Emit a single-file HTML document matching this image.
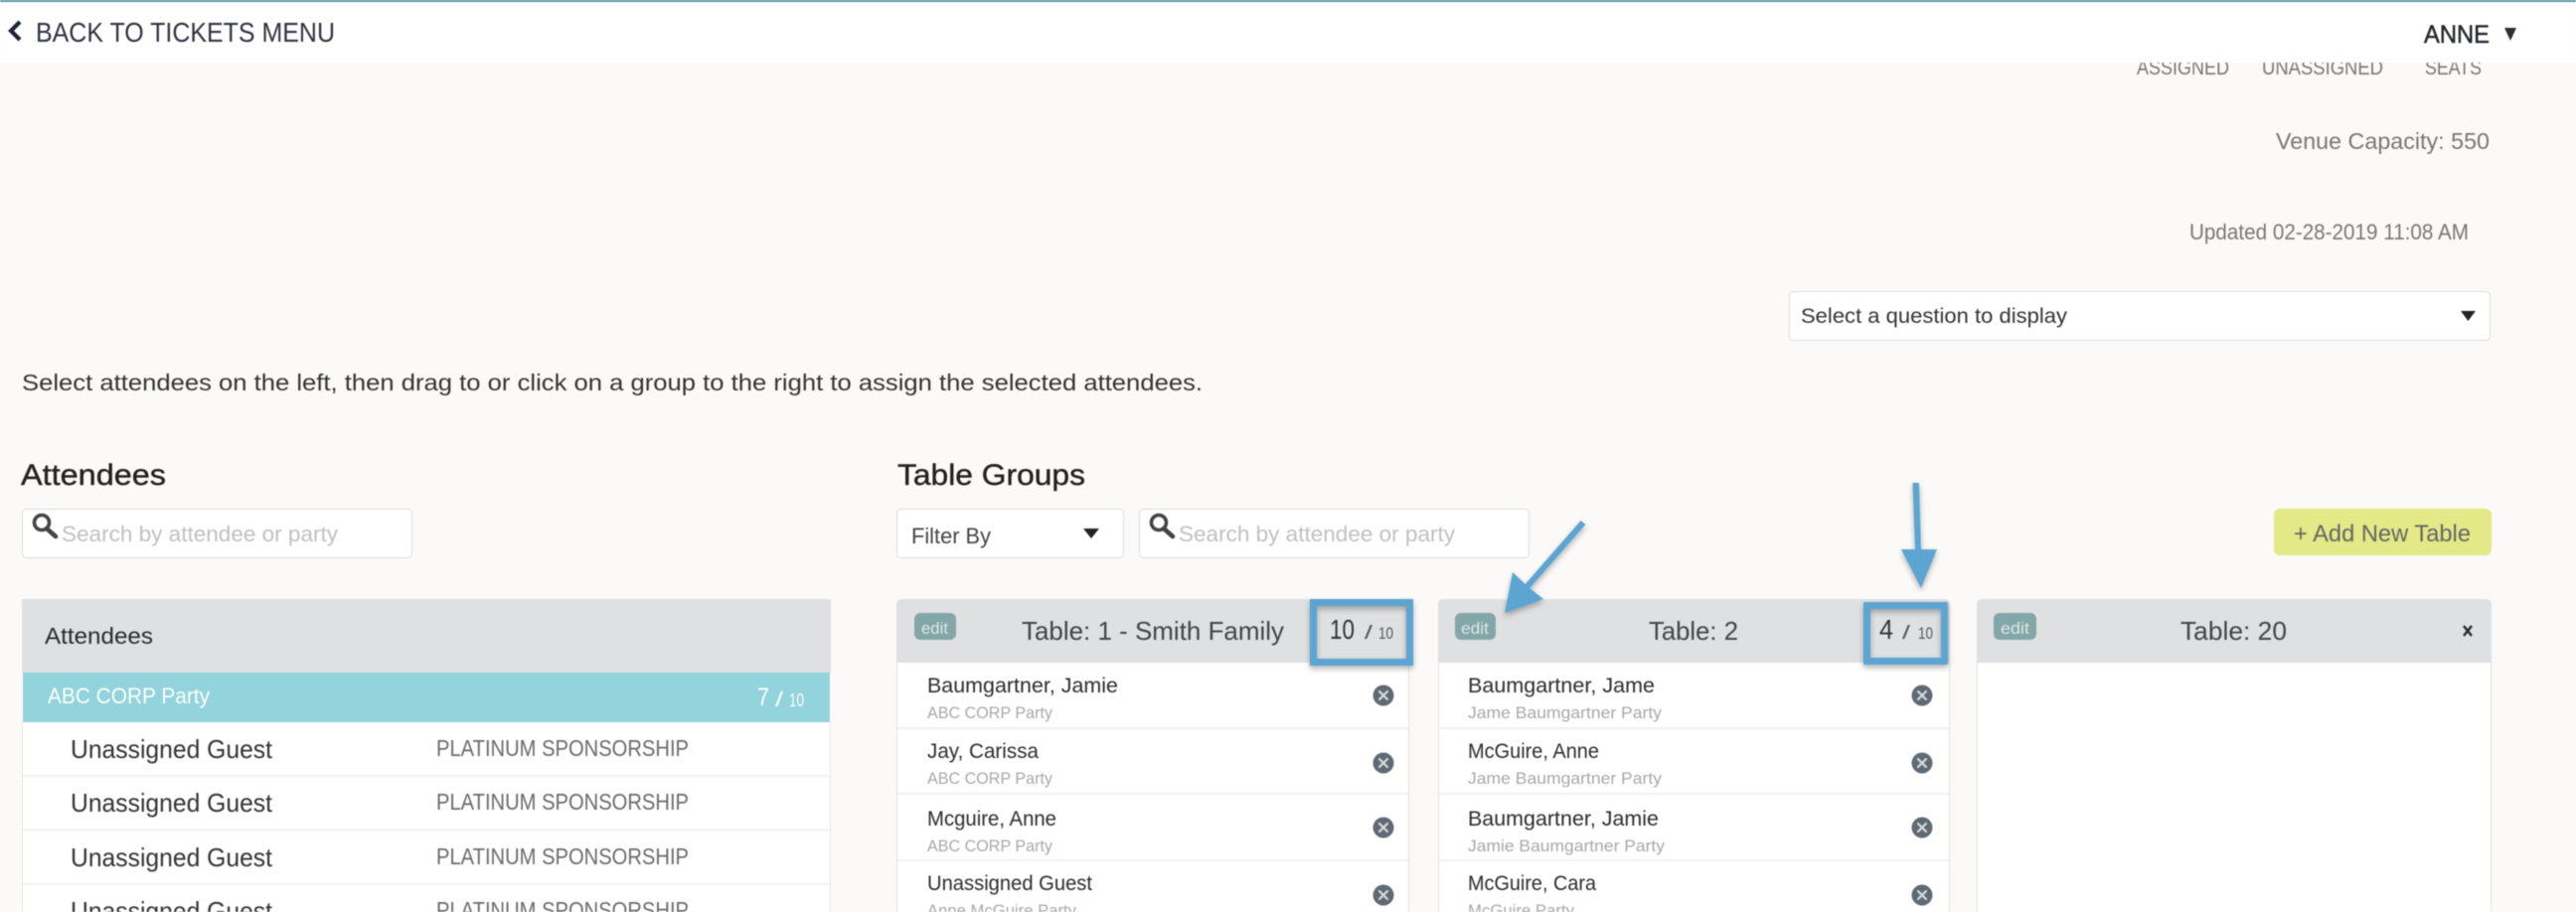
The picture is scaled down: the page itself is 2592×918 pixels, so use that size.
<!DOCTYPE html>
<html lang="en">
<head>
<meta charset="utf-8">
<title>Table Groups</title>
<style>
html,body{margin:0;padding:0;width:2592px;height:918px;overflow:hidden;background:#fbfaf8}
svg{display:block;filter:blur(.55px)}
text{font-family:"Liberation Sans",sans-serif;fill:#333}
.g{fill:#777}
.n{font-size:21px;fill:#2c2c30}
.p{font-size:17px;fill:#a8a8a8}
.u{font-size:26px;fill:#333}
.s{font-size:23px;fill:#6a6a6a}
.e{font-size:17px;fill:#dbe8e8}
.t{font-size:26px;fill:#444}
.ph{font-size:22px;fill:#c0c0c0}
.h{stroke:#222;stroke-width:.4px}
</style>
</head>
<body>
<svg xmlns="http://www.w3.org/2000/svg" width="2592" height="918" viewBox="0 0 2592 918">
<defs>
<filter id="sh" x="-30%" y="-30%" width="160%" height="160%"><feDropShadow dx="0" dy="3" stdDeviation="3" flood-color="#000" flood-opacity=".3"/></filter>
<g id="x"><circle cx="0" cy="0" r="10.5" fill="#5f6a73"/><path d="M-4-4L4 4M4-4L-4 4" stroke="#d6dadc" stroke-width="2.2" stroke-linecap="round"/></g>
<g id="q"><circle cx="0" cy="0" r="7.5" fill="none" stroke="#444" stroke-width="3.6"/><path d="M5 6L14 14" stroke="#444" stroke-width="4.6" stroke-linecap="round"/></g>
</defs>

<rect width="2592" height="918" fill="#fbfaf8"/>

<!-- clipped stat labels -->
<text class="g" x="2150" y="75" font-size="21" textLength="93" lengthAdjust="spacingAndGlyphs">ASSIGNED</text>
<text class="g" x="2276" y="75" font-size="21" textLength="122" lengthAdjust="spacingAndGlyphs">UNASSIGNED</text>
<text class="g" x="2440" y="75" font-size="21" textLength="57" lengthAdjust="spacingAndGlyphs">SEATS</text>

<!-- header -->
<rect width="2592" height="63" fill="#fff"/>
<rect width="2592" height="2" fill="#5a95a5"/>
<path d="M20 22L11 31L20 40" fill="none" stroke="#1d2433" stroke-width="4.2"/>
<text x="36" y="42" font-size="28" textLength="301" lengthAdjust="spacingAndGlyphs" style="fill:#2f3340">BACK TO TICKETS MENU</text>
<text x="2439" y="43" font-size="25" textLength="66" lengthAdjust="spacingAndGlyphs" class="h" style="fill:#22262e">ANNE</text>
<path d="M2520 28H2532L2526 41Z" fill="#2a3038"/>

<text class="g" x="2290" y="150" font-size="23" textLength="215" lengthAdjust="spacingAndGlyphs">Venue Capacity: 550</text>
<text class="g" x="2203" y="241" font-size="22" textLength="281" lengthAdjust="spacingAndGlyphs">Updated 02-28-2019 11:08 AM</text>

<rect x="1800.500" y="293.500" width="705" height="49" rx="4" fill="#fff" stroke="#dedede"/>
<text x="1812" y="325" font-size="21" textLength="268" lengthAdjust="spacingAndGlyphs">Select a question to display</text>
<path d="M2476 313H2491L2483.500 323Z" fill="#222"/>

<text x="22" y="393" font-size="23" textLength="1188" lengthAdjust="spacingAndGlyphs">Select attendees on the left, then drag to or click on a group to the right to assign the selected attendees.</text>

<text class="h" x="21" y="488" font-size="30" textLength="146" lengthAdjust="spacingAndGlyphs" style="fill:#222">Attendees</text>
<text class="h" x="903" y="488" font-size="30" textLength="189" lengthAdjust="spacingAndGlyphs" style="fill:#222">Table Groups</text>

<!-- attendee search -->
<rect x="22.500" y="512.500" width="392" height="49" rx="4" fill="#fff" stroke="#dedede"/>
<use href="#q" x="42" y="526"/>
<text class="ph" x="62" y="545" textLength="278" lengthAdjust="spacingAndGlyphs">Search by attendee or party</text>

<!-- filter -->
<rect x="902.500" y="512.500" width="228" height="49" rx="4" fill="#fff" stroke="#dedede"/>
<text x="917" y="547" font-size="22" textLength="80" lengthAdjust="spacingAndGlyphs" style="fill:#444">Filter By</text>
<path d="M1090 532H1106L1098 542Z" fill="#222"/>

<rect x="1146.500" y="512.500" width="392" height="49" rx="4" fill="#fff" stroke="#dedede"/>
<use href="#q" x="1166" y="526"/>
<text class="ph" x="1186" y="545" textLength="278" lengthAdjust="spacingAndGlyphs">Search by attendee or party</text>

<!-- add button -->
<rect x="2288" y="512" width="219" height="47" rx="6" fill="#e3e986"/>
<text x="2308" y="545" font-size="24" textLength="178" lengthAdjust="spacingAndGlyphs" style="fill:#666">+ Add New Table</text>

<!-- attendees panel -->
<rect x="22" y="603" width="814" height="74" fill="#dfe0e2"/>
<text x="45" y="648" font-size="23" textLength="109" lengthAdjust="spacingAndGlyphs" style="fill:#2a2a2a">Attendees</text>
<rect x="23" y="677" width="812" height="50" fill="#92d3dc"/>
<text x="48" y="708" font-size="22" textLength="163" lengthAdjust="spacingAndGlyphs" style="fill:#fff">ABC CORP Party</text>
<text x="762" y="710" font-size="25" textLength="12" lengthAdjust="spacingAndGlyphs" style="fill:#fff">7</text>
<text x="780" y="711" font-size="20" textLength="8" lengthAdjust="spacingAndGlyphs" style="fill:#fff">/</text>
<text x="794" y="711" font-size="18" textLength="15" lengthAdjust="spacingAndGlyphs" style="fill:#fff">10</text>
<rect x="23" y="727" width="812" height="191" fill="#fff"/>
<path d="M22.500 727V918M835.500 727V918" stroke="#e6e6e6"/>
<path d="M23 781H835M23 835.500H835M23 890H835" stroke="#f1f1f1" stroke-width="2"/>
<text class="u" x="71" y="763" textLength="203" lengthAdjust="spacingAndGlyphs">Unassigned Guest</text>
<text class="s" x="439" y="761" textLength="254" lengthAdjust="spacingAndGlyphs">PLATINUM SPONSORSHIP</text>
<text class="u" x="71" y="817" textLength="203" lengthAdjust="spacingAndGlyphs">Unassigned Guest</text>
<text class="s" x="439" y="815" textLength="254" lengthAdjust="spacingAndGlyphs">PLATINUM SPONSORSHIP</text>
<text class="u" x="71" y="872" textLength="203" lengthAdjust="spacingAndGlyphs">Unassigned Guest</text>
<text class="s" x="439" y="870" textLength="254" lengthAdjust="spacingAndGlyphs">PLATINUM SPONSORSHIP</text>
<text class="u" x="71" y="926" textLength="203" lengthAdjust="spacingAndGlyphs">Unassigned Guest</text>
<text class="s" x="439" y="924" textLength="254" lengthAdjust="spacingAndGlyphs">PLATINUM SPONSORSHIP</text>

<!-- table 1 -->
<rect x="902" y="667" width="516" height="251" fill="#fff"/>
<path d="M902 667V609Q902 603 908 603H1412Q1418 603 1418 609V667Z" fill="#dfe0e2"/>
<path d="M902.500 667V918M1417.500 667V918" stroke="#e2e2e2"/>
<path d="M903 733H1417M903 799H1417M903 866H1417" stroke="#f1f1f1" stroke-width="2"/>
<rect x="920" y="617" width="42" height="27" rx="6" fill="#83a6a8"/>
<text class="e" x="927" y="638" textLength="27" lengthAdjust="spacingAndGlyphs">edit</text>
<text class="t" x="1028" y="644" textLength="264" lengthAdjust="spacingAndGlyphs">Table: 1 - Smith Family</text>

<text class="n" x="933" y="697" textLength="192" lengthAdjust="spacingAndGlyphs">Baumgartner, Jamie</text>
<text class="p" x="933" y="723" textLength="126" lengthAdjust="spacingAndGlyphs">ABC CORP Party</text>
<text class="n" x="933" y="763" textLength="112" lengthAdjust="spacingAndGlyphs">Jay, Carissa</text>
<text class="p" x="933" y="789" textLength="126" lengthAdjust="spacingAndGlyphs">ABC CORP Party</text>
<text class="n" x="933" y="831" textLength="130" lengthAdjust="spacingAndGlyphs">Mcguire, Anne</text>
<text class="p" x="933" y="857" textLength="126" lengthAdjust="spacingAndGlyphs">ABC CORP Party</text>
<text class="n" x="933" y="896" textLength="166" lengthAdjust="spacingAndGlyphs">Unassigned Guest</text>
<text class="p" x="933" y="922" textLength="150" lengthAdjust="spacingAndGlyphs">Anne McGuire Party</text>
<use href="#x" x="1392" y="700"/>
<use href="#x" x="1392" y="768"/>
<use href="#x" x="1392" y="833"/>
<use href="#x" x="1392" y="901"/>

<!-- table 2 -->
<rect x="1447" y="667" width="515" height="251" fill="#fff"/>
<path d="M1447 667V609Q1447 603 1453 603H1956Q1962 603 1962 609V667Z" fill="#dfe0e2"/>
<path d="M1447.500 667V918M1961.500 667V918" stroke="#e2e2e2"/>
<path d="M1448 733H1961M1448 799H1961M1448 866H1961" stroke="#f1f1f1" stroke-width="2"/>
<rect x="1464" y="617" width="41" height="27" rx="6" fill="#83a6a8"/>
<text class="e" x="1470" y="638" textLength="28" lengthAdjust="spacingAndGlyphs">edit</text>
<text class="t" x="1659" y="644" textLength="90" lengthAdjust="spacingAndGlyphs">Table: 2</text>

<text class="n" x="1477" y="697" textLength="188" lengthAdjust="spacingAndGlyphs">Baumgartner, Jame</text>
<text class="p" x="1477" y="723" textLength="195" lengthAdjust="spacingAndGlyphs">Jame Baumgartner Party</text>
<text class="n" x="1477" y="763" textLength="132" lengthAdjust="spacingAndGlyphs">McGuire, Anne</text>
<text class="p" x="1477" y="789" textLength="195" lengthAdjust="spacingAndGlyphs">Jame Baumgartner Party</text>
<text class="n" x="1477" y="831" textLength="192" lengthAdjust="spacingAndGlyphs">Baumgartner, Jamie</text>
<text class="p" x="1477" y="857" textLength="198" lengthAdjust="spacingAndGlyphs">Jamie Baumgartner Party</text>
<text class="n" x="1477" y="896" textLength="129" lengthAdjust="spacingAndGlyphs">McGuire, Cara</text>
<text class="p" x="1477" y="922" textLength="107" lengthAdjust="spacingAndGlyphs">McGuire Party</text>
<use href="#x" x="1934" y="700"/>
<use href="#x" x="1934" y="768"/>
<use href="#x" x="1934" y="833"/>
<use href="#x" x="1934" y="901"/>

<!-- table 20 -->
<rect x="1989" y="667" width="518" height="251" fill="#fff"/>
<path d="M1989 667V609Q1989 603 1995 603H2501Q2507 603 2507 609V667Z" fill="#dfe0e2"/>
<path d="M1989.500 667V918M2506.500 667V918" stroke="#e2e2e2"/>
<rect x="2006" y="617" width="43" height="27" rx="6" fill="#83a6a8"/>
<text class="e" x="2013" y="638" textLength="29" lengthAdjust="spacingAndGlyphs">edit</text>
<text class="t" x="2194" y="644" textLength="107" lengthAdjust="spacingAndGlyphs">Table: 20</text>
<path d="M2479 630L2487 640M2487 630L2479 640" stroke="#2a2a2a" stroke-width="2.400"/>

<!-- counters -->
<text x="1338" y="643" font-size="28" textLength="25" lengthAdjust="spacingAndGlyphs" style="fill:#333">10</text>
<text x="1373" y="643" font-size="19" textLength="8" lengthAdjust="spacingAndGlyphs" style="fill:#555">/</text>
<text x="1387" y="643" font-size="17" textLength="15" lengthAdjust="spacingAndGlyphs" style="fill:#555">10</text>
<text x="1891" y="643" font-size="28" textLength="14" lengthAdjust="spacingAndGlyphs" style="fill:#333">4</text>
<text x="1914" y="643" font-size="19" textLength="8" lengthAdjust="spacingAndGlyphs" style="fill:#555">/</text>
<text x="1930" y="643" font-size="17" textLength="15" lengthAdjust="spacingAndGlyphs" style="fill:#555">10</text>

<!-- annotations -->
<g filter="url(#sh)">
<rect x="1321.500" y="606.500" width="97" height="60" fill="none" stroke="#5ba4d2" stroke-width="7"/>
<rect x="1878.500" y="609.500" width="78" height="56" fill="none" stroke="#5ba4d2" stroke-width="7"/>
<path d="M1595.300 528L1539.300 592L1553 603L1514 617L1522 576L1534.700 588L1590.700 524Z" fill="#5ba4d2"/>
<path d="M1924.500 486H1931L1933 553H1949L1933 592L1913 553H1927Z" fill="#5ba4d2"/>
</g>
</svg>
</body>
</html>
